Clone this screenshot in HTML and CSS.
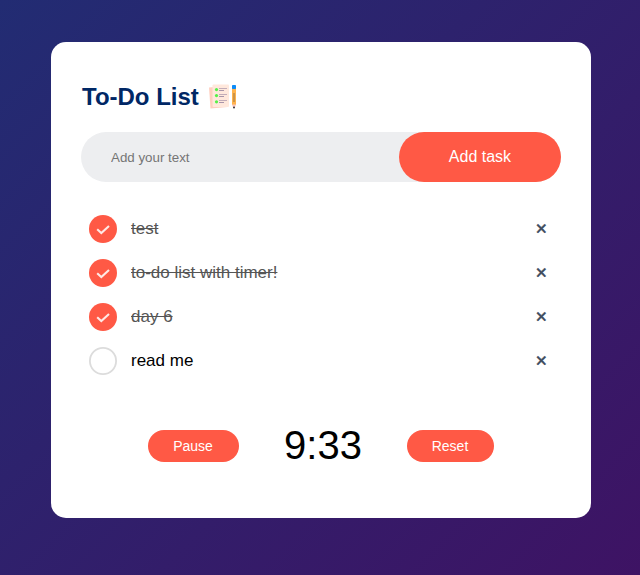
FILE: index.html
```html
<!DOCTYPE html>
<html lang="en">
<head>
<meta charset="utf-8">
<title>To-Do List</title>
<link rel="stylesheet" href="styles.css">
</head>
<body>
<main class="todo-app">
  <h2 class="title">To-Do List
    <svg class="icon" viewBox="0 0 30 30" aria-hidden="true">
      <path d="M1 5.5 L18 4 L19.5 25 L2.5 26.5Z" fill="#ffcfc0"/>
      <rect x="4.5" y="2.5" width="16.5" height="22.5" rx="1" fill="#ffe8dc"/>
      <g fill="#55f148"><circle cx="8.5" cy="7.6" r="1.6"/><circle cx="8.5" cy="13.6" r="1.6"/><circle cx="8.5" cy="19.8" r="1.6"/></g>
      <path d="M11 6.5h8M11 12.5h8M11 18.5h8" stroke="#c3adb9" stroke-width="1"/>
      <path d="M11 8.5h5M11 14.5h5M11 20.5h5" stroke="#a995a9" stroke-width="1"/>
      <rect x="24" y="6" width="4" height="17" fill="#ffb34d"/>
      <rect x="24" y="3" width="4" height="4" rx=".8" fill="#0a8bfa"/>
      <path d="M26 11v9" stroke="#987648" stroke-width="1"/>
      <path d="M24 22.5h4L26.7 26h-1.4Z" fill="#f8c5bd"/>
      <circle cx="26" cy="25.4" r="1" fill="#34343f"/>
    </svg>
  </h2>
  <div class="row">
    <input type="text" placeholder="Add your text">
    <button class="add">Add task</button>
  </div>
  <ul class="list">
    <li class="item done"><svg class="mark" viewBox="0 0 28 28"><circle cx="14" cy="14" r="14"/><path d="M8.2 14.3l4.1 3.7 7.7-7"/></svg><span class="label">test</span><span class="remove">✕</span></li>
    <li class="item done"><svg class="mark" viewBox="0 0 28 28"><circle cx="14" cy="14" r="14"/><path d="M8.2 14.3l4.1 3.7 7.7-7"/></svg><span class="label">to-do list with timer!</span><span class="remove">✕</span></li>
    <li class="item done"><svg class="mark" viewBox="0 0 28 28"><circle cx="14" cy="14" r="14"/><path d="M8.2 14.3l4.1 3.7 7.7-7"/></svg><span class="label">day 6</span><span class="remove">✕</span></li>
    <li class="item"><svg class="mark" viewBox="0 0 28 28"><circle cx="14" cy="14" r="13.1"/></svg><span class="label">read me</span><span class="remove">✕</span></li>
  </ul>
  <div class="timer">
    <button class="control pause">Pause</button>
    <span class="time">9:33</span>
    <button class="control reset">Reset</button>
  </div>
</main>
</body>
</html>
```
FILE: styles.css
```css
* {
  margin: 0;
  padding: 0;
  box-sizing: border-box;
  font-family: "Liberation Sans", Arial, sans-serif;
}

body {
  height: 575px;
  padding: 42px 49px 0 51px;
  background: linear-gradient(135deg, #222c73, #3e1364);
  overflow: hidden;
}

.todo-app {
  width: 540px;
  height: 476px;
  padding: 40px 30px 0;
  border-radius: 15px;
  background: #fff;
}

.title {
  display: flex;
  align-items: center;
  height: 30px;
  padding-left: 1px;
  color: #002765;
  font-size: 24px;
}

.icon {
  width: 30px;
  height: 30px;
  margin-left: 9.3px;
}

.row {
  display: flex;
  height: 50px;
  margin-top: 20px;
  border-radius: 30px;
  background: #edeef0;
}

input {
  flex: 1;
  min-width: 0;
  padding-left: 30px;
  border: 0;
  outline: 0;
  background: transparent;
  font-size: 13.33px;
}

input::placeholder {
  color: #757575;
}

button {
  border: 0;
  border-radius: 40px;
  background: #ff5945;
  color: #fff;
}

.add {
  width: 162px;
  font-size: 16px;
}

.list {
  margin-top: 25px;
  list-style: none;
}

.item {
  display: flex;
  align-items: center;
  height: 44px;
  padding: 0 10px 0 8px;
  font-size: 17px;
}

.mark {
  width: 28px;
  height: 28px;
  margin-right: 14px;
  fill: #fff;
}

.mark circle {
  stroke: #dcdcdc;
  stroke-width: 1.8;
}

.done .mark circle {
  fill: #ff5945;
  stroke: none;
}

.mark path {
  fill: none;
  stroke: #ffe9e5;
  stroke-width: 2.1;
}

.label {
  flex: 1;
}

.done .label {
  color: #555;
  text-decoration: line-through;
}

.remove {
  width: 20px;
  padding-bottom: 1px;
  color: #3c4a5c;
  font-size: 15px;
  text-align: center;
  -webkit-text-stroke: 0.5px #3c4a5c;
}

.timer {
  display: flex;
  align-items: center;
  height: 50px;
  margin-top: 38px;
  padding-left: 67px;
}

.control {
  height: 32px;
  padding-right: 1px;
  font-size: 14px;
}

.pause {
  width: 91px;
}

.time {
  width: 168px;
  padding-bottom: 2px;
  font-size: 40px;
  text-align: center;
}

.reset {
  width: 87px;
}
```
